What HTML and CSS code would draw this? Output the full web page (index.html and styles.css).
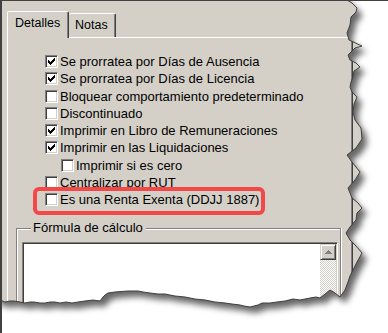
FILE: index.html
```html
<!DOCTYPE html>
<html>
<head>
<meta charset="utf-8">
<link rel="stylesheet" href="styles.css">
</head>
<body>
<div class="window">
  <div class="tabbar">
    <div class="tab active">Detalles</div>
    <div class="tab">Notas</div>
  </div>
  <div class="panel">
    <div class="list">
      <div class="row"><span class="cb"><svg width="7" height="7" viewBox="0 0 7 7"><path d="M0 2h1v1h1v1h1V3h1V2h1V1h1V0h1v3h-1v1h-1v1h-1v1h-1v1H2V6H1V5H0z" fill="#000"/></svg></span>Se prorratea por Días de Ausencia</div>
      <div class="row"><span class="cb"><svg width="7" height="7" viewBox="0 0 7 7"><path d="M0 2h1v1h1v1h1V3h1V2h1V1h1V0h1v3h-1v1h-1v1h-1v1h-1v1H2V6H1V5H0z" fill="#000"/></svg></span>Se prorratea por Días de Licencia</div>
      <div class="row"><span class="cb"></span>Bloquear comportamiento predeterminado</div>
      <div class="row"><span class="cb"></span>Discontinuado</div>
      <div class="row"><span class="cb"><svg width="7" height="7" viewBox="0 0 7 7"><path d="M0 2h1v1h1v1h1V3h1V2h1V1h1V0h1v3h-1v1h-1v1h-1v1h-1v1H2V6H1V5H0z" fill="#000"/></svg></span>Imprimir en Libro de Remuneraciones</div>
      <div class="row"><span class="cb"><svg width="7" height="7" viewBox="0 0 7 7"><path d="M0 2h1v1h1v1h1V3h1V2h1V1h1V0h1v3h-1v1h-1v1h-1v1h-1v1H2V6H1V5H0z" fill="#000"/></svg></span>Imprimir en las Liquidaciones</div>
      <div class="row sub"><span class="cb"></span>Imprimir si es cero</div>
      <div class="row"><span class="cb"></span>Centralizar por RUT</div>
      <div class="row"><span class="cb"></span>Es una Renta Exenta (DDJJ 1887)</div>
    </div>
    <div class="gb">
      <div class="gb-head">
        <span class="seg seg-l"></span>
        <span class="gb-label">Fórmula de cálculo</span>
        <span class="seg seg-r"></span>
      </div>
      <div class="gb-body">
        <div class="textarea">
          <div class="ta-text"></div>
          <div class="scrollbar">
            <div class="sb-btn"><svg width="7" height="4" viewBox="0 0 7 4"><path d="M3 0h1v1h1v1h1v1h1v1H0V3h1V2h1V1h1z" fill="#808080"/></svg></div>
            <div class="sb-track"></div>
          </div>
        </div>
      </div>
    </div>
  </div>
  <div class="highlight"></div>
  <svg class="torn" width="388" height="333" viewBox="0 0 388 333">
    <defs>
      <path id="t" d="M-5 -5 L346 -5 L347 0 L352 3 L357 8 L356 12 L351 17 L350 25 L347 33 L349 40 L362 46 L355 48 L348 55 L350 60 L356 63 L360 67 L354 71 L353 77 L351 82 L350 87 L352 92 L357 97 L354 104 L353 112 L355 120 L361 128 L362 139 L356 148 L347 155 L352 162 L356 167 L360 172 L355 180 L348 188 L350 193 L352 198 L358 203 L362 208 L357 213 L356 220 L350 227 L346 233 L350 240 L356 246 L362 253 L357 262 L353 270 L350 276 L348 282 L345 290 L340 297 L335 293 L330 290 L325 294 L320 298 L316 297 L310 298 L300 300 L293 299 L285 301 L277 302 L270 303 L262 303 L258 305 L250 307 L244 306 L240 305 L232 304 L225 303 L215 302 L205 300 L195 299 L185 297 L175 296 L165 294 L158 294 L150 293 L143 292 L138 291 L128 291 L115 292 L108 293 L105 295 L103 297 L100 301 L93 300 L85 301 L78 302 L72 303 L66 302 L60 303 L55 302 L50 302 L45 303 L40 303 L34 302 L30 302 L25 303 L20 302 L14 301 L10 301 L5 302 L0 300 L-5 300 Z"/>
      <filter id="blur" x="-20%" y="-20%" width="140%" height="140%"><feGaussianBlur stdDeviation="3"/></filter>
      <mask id="outside"><rect x="-10" y="-10" width="410" height="350" fill="#fff"/><use href="#t" fill="#000"/></mask>
    </defs>
    <g mask="url(#outside)">
      <rect x="-10" y="-10" width="410" height="350" fill="#fff"/>
      <use href="#t" transform="translate(5 6)" fill="#000" fill-opacity="0.6" filter="url(#blur)"/>
    </g>
    <use href="#t" fill="none" stroke="#404040" stroke-width="1"/>
  </svg>
</div>
</body>
</html>
```

FILE: styles.css
```css
* { box-sizing: border-box; }
html, body { margin: 0; padding: 0; background: #fff; }
body {
  font-family: "Liberation Sans", Arial, sans-serif;
  font-size: 13px;
  color: #000;
}
.window {
  position: relative;
  width: 388px;
  height: 333px;
  overflow: hidden;
  background: #d4d0c8;
  border-top: 1px solid #404040;
  border-left: 2px solid #404040;
  padding: 10px 0 0 5px;
  display: flex;
  flex-direction: column;
}
.tabbar {
  display: flex;
  align-items: flex-end;
  height: 26px;
}
.tab {
  background: #d4d0c8;
  border-top: 1px solid #fff;
  border-right: 1px solid #404040;
  box-shadow: inset -1px 0 #808080;
  border-radius: 2px 2px 0 0;
  height: 24px;
  width: 47px;
  padding-left: 6px;
  line-height: 23px;
  font-size: 12.5px;
}
.tab.active {
  position: relative;
  z-index: 1;
  width: 62px;
  height: 27px;
  margin-bottom: -1px;
  border-left: 1px solid #fff;
  padding-left: 7px;
  line-height: 22px;
}
.panel {
  width: 346px;
  flex: 1;
  border-top: 1px solid #fff;
  border-left: 1px solid #fff;
  border-right: 1px solid #404040;
  box-shadow: inset -1px 0 #808080;
  padding-top: 15px;
}
.list {
  padding-left: 37px;
}
.row {
  height: 17.25px;
  display: flex;
  align-items: center;
  gap: 2px;
  white-space: nowrap;
}
.row.sub { padding-left: 16px; }
.cb {
  width: 13px;
  height: 13px;
  flex: none;
  background: #fff;
  border: 1px solid;
  border-color: #808080 #fff #fff #808080;
  box-shadow: inset 1px 1px #404040, inset -1px -1px #d4d0c8;
  display: flex;
  align-items: center;
  justify-content: center;
}
.cb svg { display: block; }
.gb {
  margin: 13px 0 0 8px;
  width: 325px;
}
.gb-head {
  display: flex;
  align-items: flex-end;
  height: 14px;
}
.seg {
  height: 7px;
  border-top: 1px solid #808080;
  box-shadow: inset 0 1px #fff;
}
.seg-l {
  width: 15px;
  border-left: 1px solid #808080;
  box-shadow: inset 1px 1px #fff;
}
.seg-r {
  flex: 1;
  border-right: 1px solid #808080;
  box-shadow: inset 0 1px #fff, 1px 0 #fff;
}
.gb-label {
  align-self: center;
  padding: 0 3px 0 2px;
  line-height: 14px;
  white-space: nowrap;
}
.gb-body {
  border-left: 1px solid #808080;
  border-right: 1px solid #808080;
  box-shadow: inset 1px 0 #fff, 1px 0 #fff;
  height: 90px;
  padding: 7px 0 0 5px;
}
.textarea {
  width: 316px;
  height: 80px;
  background: #fff;
  border: 1px solid;
  border-color: #808080 #fff #fff #808080;
  box-shadow: inset 1px 1px #404040, inset -1px -1px #d4d0c8;
  padding: 1px;
  display: flex;
}
.ta-text { flex: 1; }
.scrollbar {
  width: 16px;
  display: flex;
  flex-direction: column;
}
.sb-btn {
  height: 16px;
  background: #d4d0c8;
  border: 1px solid;
  border-color: #d4d0c8 #404040 #404040 #d4d0c8;
  box-shadow: inset 1px 1px #fff, inset -1px -1px #808080;
  display: flex;
  align-items: center;
  justify-content: center;
}
.sb-btn svg { display: block; }
.sb-track {
  flex: 1;
  background: repeating-conic-gradient(#fff 0 25%, #d4d0c8 0 50%) 0 0 / 2px 2px;
}
.highlight {
  position: absolute;
  left: 31px;
  top: 186px;
  width: 232px;
  height: 28px;
  border: 4px solid #f24848;
  border-radius: 6px;
}
.torn {
  position: absolute;
  left: -2px;
  top: -1px;
  display: block;
}
```
